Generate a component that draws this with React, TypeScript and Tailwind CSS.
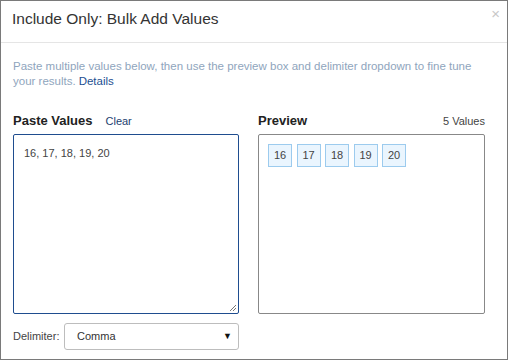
const values = ["16", "17", "18", "19", "20"];

export default function App() {
  return (
    <div
      className="w-[508px] h-[360px] bg-white border border-[#7a7a7a] flex flex-col text-[#333]"
      style={{ fontFamily: '"Liberation Sans", Arial, sans-serif' }}
    >
      <div className="h-[42px] shrink-0 border-b border-[#e5e5e5] flex items-start justify-between pl-[11px] pr-[7px]">
        <h1 className="text-[15.5px] leading-none mt-[10px] text-[#333]">Include Only: Bulk Add Values</h1>
        <span className="text-[15px] leading-none mt-[5px] text-[#c8c8c8]">×</span>
      </div>

      <div className="flex flex-col px-[12px] pt-[16px]">
        <div className="text-[11.5px] leading-[15px] text-[#8fa5bd]">
          <div>Paste multiple values below, then use the preview box and delimiter dropdown to fine tune</div>
          <div className="flex gap-[3px]">
            <span>your results.</span>
            <span className="text-[#1d4f91]">Details</span>
          </div>
        </div>

        <div className="flex gap-[19px] mt-[24px]">
          <div className="w-[226px] flex flex-col">
            <div className="flex items-start h-[21px] leading-[15px]">
              <span className="text-[13px] font-bold text-[#222]">Paste Values</span>
              <span className="text-[11px] ml-[13px] mt-[1px] text-[#1d3e70]">Clear</span>
            </div>
            <div className="h-[180px] border border-[#1f4d8f] rounded-[2px] relative">
              <div className="text-[11px] text-[#444] pl-[10px] pt-[10px]">16, 17, 18, 19, 20</div>
              <svg className="absolute right-[1px] bottom-[1px]" width="8" height="8" viewBox="0 0 8 8">
                <path d="M7 1 L1 7 M7 4 L4 7" stroke="#777" strokeWidth="1" />
              </svg>
            </div>
            <div className="flex items-center mt-[9px]">
              <span className="text-[11px] text-[#444] w-[51px]">Delimiter:</span>
              <div className="flex-1 h-[27px] border border-[#bdbdbd] rounded-[3px] flex items-center justify-between pl-[12px] pr-[6px]">
                <span className="text-[11px] text-[#333]">Comma</span>
                <span className="text-[9px] text-[#111]">▼</span>
              </div>
            </div>
          </div>

          <div className="w-[227px] flex flex-col">
            <div className="flex items-start justify-between h-[21px] leading-[15px]">
              <span className="text-[13px] font-bold text-[#222]">Preview</span>
              <span className="text-[11px] mt-[1px] text-[#444]">5 Values</span>
            </div>
            <div className="h-[180px] border border-[#888] rounded-[2px] pl-[9px] pt-[9px]">
              <div className="flex gap-[4.5px]">
                {values.map((v) => (
                  <div
                    key={v}
                    className="w-[24px] h-[23px] bg-[#eaf5fe] border border-[#9ccbee] flex items-center justify-center text-[11px] text-[#444]"
                  >
                    {v}
                  </div>
                ))}
              </div>
            </div>
          </div>
        </div>
      </div>
    </div>
  );
}
